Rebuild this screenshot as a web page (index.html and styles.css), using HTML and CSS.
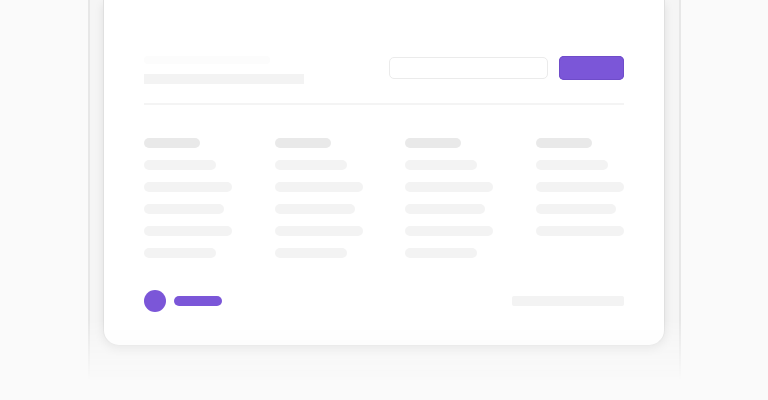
FILE: index.html
```html
<!DOCTYPE html>
<html>
<head>
<meta charset="utf-8">
<link rel="stylesheet" href="styles.css">
</head>
<body>
<div class="panel">
  <div class="card">
    <div class="head">
      <div class="head-left">
        <div class="bar title"></div>
        <div class="bar subtitle"></div>
      </div>
      <div class="head-right">
        <div class="input"></div>
        <div class="button"></div>
      </div>
    </div>
    <div class="divider"></div>
    <div class="cols">
      <div class="col">
        <div class="bar th"></div>
        <div class="bar td w72"></div>
        <div class="bar td w88"></div>
        <div class="bar td w80"></div>
        <div class="bar td w88"></div>
        <div class="bar td w72"></div>
      </div>
      <div class="col">
        <div class="bar th"></div>
        <div class="bar td w72"></div>
        <div class="bar td w88"></div>
        <div class="bar td w80"></div>
        <div class="bar td w88"></div>
        <div class="bar td w72"></div>
      </div>
      <div class="col">
        <div class="bar th"></div>
        <div class="bar td w72"></div>
        <div class="bar td w88"></div>
        <div class="bar td w80"></div>
        <div class="bar td w88"></div>
        <div class="bar td w72"></div>
      </div>
      <div class="col">
        <div class="bar th"></div>
        <div class="bar td w72"></div>
        <div class="bar td w88"></div>
        <div class="bar td w80"></div>
        <div class="bar td w88"></div>
      </div>
    </div>
    <div class="foot">
      <div class="foot-left">
        <div class="dot"></div>
        <div class="pill"></div>
      </div>
      <div class="bar foot-right"></div>
    </div>
  </div>
</div>
</body>
</html>
```

FILE: styles.css
```css
html, body {
  margin: 0;
  padding: 0;
}
body {
  background: #fafafa;
  height: 400px;
  overflow: hidden;
  font-family: "Inter", "Liberation Sans", sans-serif;
}
.panel {
  box-sizing: border-box;
  width: 593px;
  height: 390px;
  margin: 0 auto;
  border-left: 2px solid #e7e7e7;
  border-right: 2px solid #e7e7e7;
  background: #f5f5f5;
  display: flex;
  justify-content: center;
  align-items: flex-start;
  -webkit-mask-image: linear-gradient(to bottom, #000 0, #000 320px, transparent 380px);
  mask-image: linear-gradient(to bottom, #000 0, #000 320px, transparent 380px);
}
.card {
  box-sizing: border-box;
  width: 562px;
  background: #fff;
  border: 1px solid #e0e0e0;
  border-top: none;
  border-radius: 0 0 16px 16px;
  box-shadow: 0 4px 10px rgba(0, 0, 0, 0.09);
  padding: 56px 40px 33px;
}
.bar {
  height: 10px;
  border-radius: 5px;
  background: #f3f3f3;
}
.head {
  display: flex;
  justify-content: space-between;
  align-items: flex-start;
}
.head-left {
  display: flex;
  flex-direction: column;
  gap: 10px;
}
.title {
  width: 126px;
  height: 8px;
  background: #fcfcfc;
}
.subtitle {
  width: 160px;
  border-radius: 0;
}
.head-right {
  display: flex;
  align-items: center;
  gap: 11px;
}
.input {
  box-sizing: border-box;
  width: 159px;
  height: 22px;
  border: 1.5px solid #ebebeb;
  border-radius: 5px;
  background: #fff;
}
.button {
  width: 65px;
  height: 24px;
  border-radius: 5px;
  background: #7b56d8;
  box-shadow: inset 0 0 0 1px #6f4cc9;
}
.divider {
  height: 2px;
  background: #f4f4f4;
  margin-top: 19px;
}
.cols {
  display: grid;
  grid-template-columns: repeat(4, 1fr);
  column-gap: 42.67px;
  margin-top: 33px;
}
.col {
  display: flex;
  flex-direction: column;
  align-items: flex-start;
  gap: 12px;
}
.th {
  width: 56px;
  background: #e9e9e9;
}
.w72 { width: 72px; }
.w80 { width: 80px; }
.w88 { width: 88px; }
.foot {
  display: flex;
  justify-content: space-between;
  align-items: center;
  margin-top: 32px;
}
.foot-left {
  display: flex;
  align-items: center;
  gap: 8px;
}
.dot {
  width: 22px;
  height: 22px;
  border-radius: 50%;
  background: #7b56d8;
}
.pill {
  width: 48px;
  height: 10px;
  border-radius: 5px;
  background: #7b56d8;
}
.foot-right {
  width: 112px;
  border-radius: 2px;
}
```
